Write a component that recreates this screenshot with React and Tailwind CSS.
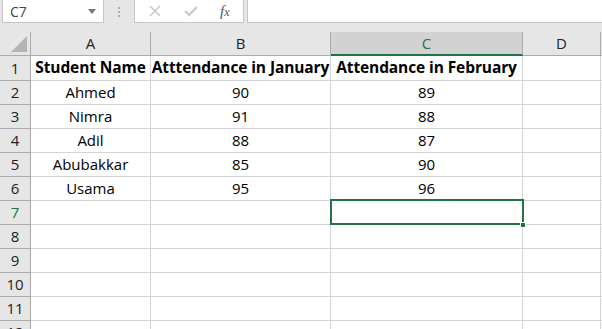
import React from 'react';

const cols = [
  { key: 'A', w: 'w-[120px]' },
  { key: 'B', w: 'w-[180px]' },
  { key: 'C', w: 'w-[192px]' },
  { key: 'D', w: 'w-[78px]' },
];

const rows = [
  ['Student Name', 'Atttendance in January', 'Attendance in February', ''],
  ['Ahmed', '90', '89', ''],
  ['Nimra', '91', '88', ''],
  ['Adil', '88', '87', ''],
  ['Abubakkar', '85', '90', ''],
  ['Usama', '95', '96', ''],
  ['', '', '', ''],
  ['', '', '', ''],
  ['', '', '', ''],
  ['', '', '', ''],
  ['', '', '', ''],
  ['', '', '', ''],
];

function FormulaBar() {
  return (
    <div className="flex h-[32px] bg-[#e6e6e6] text-[#444]">
      <div className="ml-[2px] flex h-[23px] w-[102px] items-center justify-between border-x border-b border-[#c6c6c6] bg-white pl-[7px] pr-[7px] text-[14px]">
        <span>C7</span>
        <span className="h-0 w-0 border-x-[4px] border-t-[5px] border-x-transparent border-t-[#777]" />
      </div>
      <div className="flex w-[30px] flex-col items-center justify-center gap-[2px] pb-[8px]">
        <span className="h-[2px] w-[2px] bg-[#b0b0b0]" />
        <span className="h-[2px] w-[2px] bg-[#b0b0b0]" />
        <span className="h-[2px] w-[2px] bg-[#b0b0b0]" />
      </div>
      <div className="flex h-[23px] w-[110px] items-center border-x border-b border-[#c6c6c6] bg-white">
        <svg width="14" height="14" viewBox="0 0 14 14" className="ml-[13px]">
          <path d="M2 2 L12 12 M12 2 L2 12" stroke="#c8c8c8" strokeWidth="1.5" fill="none" />
        </svg>
        <svg width="16" height="14" viewBox="0 0 16 14" className="ml-[21px]">
          <path d="M2 7 L6 11 L14 3" stroke="#c8c8c8" strokeWidth="2" fill="none" />
        </svg>
        <span className="ml-[21px] italic text-[15px] text-[#555]" style={{ fontFamily: '"Liberation Serif", serif' }}>
          f<span className="text-[12px]">x</span>
        </span>
      </div>
      <div className="ml-[3px] h-[23px] flex-1 border-l border-b border-[#c6c6c6] bg-white" />
    </div>
  );
}

export default function App() {
  return (
    <div className="relative h-[329px] w-[602px] overflow-hidden bg-white" style={{ fontFamily: '"Open Sans", Lato, sans-serif' }}>
      <FormulaBar />
      <div className="flex">
        <div className="flex h-[24px] w-[31px] items-end justify-end border-r border-b border-[#ababab] bg-[#e6e6e6] p-[3px]">
          <span className="h-0 w-0 border-b-[16px] border-l-[16px] border-b-[#b4b4b4] border-l-transparent" />
        </div>
        {cols.map((c) => (
          <div
            key={c.key}
            className={`${c.w} flex h-[24px] items-center justify-center border-r text-[15px] ${
              c.key === 'C'
                ? 'border-b-2 border-r-[#ababab] border-b-[#217346] bg-[#d2d2d2] text-[#217346]'
                : 'border-b border-[#ababab] bg-[#e6e6e6] text-[#222]'
            }`}
          >
            {c.key}
          </div>
        ))}
        <div className="h-[24px] flex-1 border-b border-[#ababab] bg-[#e6e6e6]" />
      </div>
      {rows.map((r, i) => (
        <div key={i} className={`flex ${i === 0 ? 'h-[25px]' : 'h-[24px]'}`}>
          <div
            className={`flex w-[31px] items-center justify-center border-r border-b border-[#ababab] bg-[#e6e6e6] text-[15px] ${
              i === 6 ? 'text-[#217346]' : 'text-[#222]'
            }`}
          >
            {i + 1}
          </div>
          {cols.map((c, j) => (
            <div
              key={c.key}
              className={`${c.w} flex items-center justify-center overflow-visible whitespace-nowrap border-r border-b border-[#d4d4d4] text-black ${
                i === 0 ? 'font-bold text-[15.5px] tracking-[-0.1px]' : 'text-[15px]'
              }`}
            >
              {r[j]}
            </div>
          ))}
          <div className="flex-1 border-b border-[#d4d4d4]" />
        </div>
      ))}
      <div className="absolute left-[330px] top-[199px] h-[26px] w-[194px] border-2 border-[#217346]" />
      <div className="absolute left-[520px] top-[222px] h-[6px] w-[6px] border border-white bg-[#217346]" />
    </div>
  );
}
